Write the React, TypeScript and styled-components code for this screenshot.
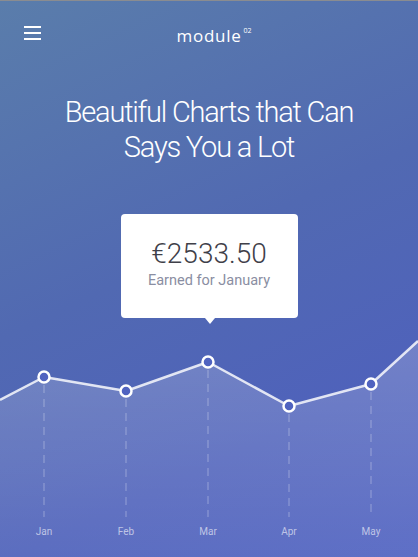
import React from "react";
import styled, { createGlobalStyle } from "styled-components";

const Global = createGlobalStyle`
  html, body { margin: 0; padding: 0; }
  body { font-family: Roboto, "Liberation Sans", sans-serif; }
`;

const Page = styled.div`
  width: 418px;
  height: 557px;
  box-sizing: border-box;
  border-top: 1px solid #8a8c90;
  background: linear-gradient(155deg, #5a7dab 0%, #5169b2 45%, #4f62bb 75%, #5264c2 100%);
  display: flex;
  flex-direction: column;
  overflow: hidden;
  position: relative;
`;

const Header = styled.header`
  height: 65px;
  display: flex;
  align-items: center;
  justify-content: center;
  position: relative;
`;

const Burger = styled.button`
  position: absolute;
  left: 24px;
  top: 25px;
  width: 17px;
  height: 14px;
  padding: 0;
  border: none;
  background: none;
  display: flex;
  flex-direction: column;
  justify-content: space-between;
  span {
    display: block;
    height: 2px;
    background: #fff;
  }
`;

const Logo = styled.div`
  color: #fff;
  font-family: "Open Sans", "Liberation Sans", sans-serif;
  font-size: 17px;
  letter-spacing: 0.7px;
  margin-top: 3px;
  margin-left: 10px;
  sup {
    font-size: 7px;
    letter-spacing: 0;
    margin-left: 2px;
    vertical-align: 9px;
  }
`;

const Title = styled.h1`
  margin: 29px 0 0;
  color: #fff;
  font-weight: 300;
  font-size: 29px;
  line-height: 35px;
  text-align: center;
  letter-spacing: -1.2px;
`;

const CardWrap = styled.div`
  display: flex;
  justify-content: center;
  margin-top: 49px;
`;

const Card = styled.div`
  width: 177px;
  height: 104px;
  box-sizing: border-box;
  background: #fff;
  border-radius: 4px;
  padding-top: 23px;
  text-align: center;
  position: relative;
  &::after {
    content: "";
    position: absolute;
    left: 84px;
    bottom: -6px;
    border-left: 5px solid transparent;
    border-right: 5px solid transparent;
    border-top: 6px solid #fff;
  }
`;

const Price = styled.div`
  font-size: 28px;
  font-weight: 300;
  line-height: 34px;
  color: #3f4049;
`;

const Sub = styled.div`
  font-size: 14.5px;
  line-height: 20px;
  color: #8a8ea2;
`;

const Chart = styled.svg`
  display: block;
  margin-top: 12px;
  flex: 1;
`;

const Label = styled.text`
  font-family: Roboto, "Liberation Sans", sans-serif;
  font-size: 10px;
  fill: rgba(255, 255, 255, 0.6);
`;

const OFF = 330;
const pts = [
  { m: "Jan", x: 44, y: 377 },
  { m: "Feb", x: 126, y: 391 },
  { m: "Mar", x: 208, y: 362 },
  { m: "Apr", x: 289, y: 406 },
  { m: "May", x: 371, y: 384 },
];

export default function App() {
  const line = [
    `0,${400 - OFF}`,
    ...pts.map((p) => `${p.x},${p.y - OFF}`),
    `418,${341 - OFF}`,
  ].join(" ");
  const area = `0,${400 - OFF} ${pts.map((p) => `${p.x},${p.y - OFF}`).join(" ")} 418,${341 - OFF} 418,227 0,227`;
  return (
    <>
      <Global />
      <Page>
        <Header>
          <Burger aria-label="menu">
            <span />
            <span />
            <span />
          </Burger>
          <Logo>
            module<sup>02</sup>
          </Logo>
        </Header>
        <Title>
          Beautiful Charts that Can
          <br />
          Says You a Lot
        </Title>
        <CardWrap>
          <Card>
            <Price>€2533.50</Price>
            <Sub>Earned for January</Sub>
          </Card>
        </CardWrap>
        <Chart width="418" height="227" viewBox="0 0 418 227">
          <defs>
            <linearGradient id="areaFill" x1="0" y1="0" x2="0" y2="1">
              <stop offset="0" stopColor="#fff" stopOpacity="0.2" />
              <stop offset="1" stopColor="#fff" stopOpacity="0.07" />
            </linearGradient>
          </defs>
          <polygon points={area} fill="url(#areaFill)" />
          {pts.map((p) => (
            <line
              key={p.m}
              x1={p.x}
              x2={p.x}
              y1={p.y - OFF + 8}
              y2={517 - OFF}
              stroke="rgba(255,255,255,0.22)"
              strokeWidth="1.5"
              strokeDasharray="8 6"
            />
          ))}
          <polyline points={line} fill="none" stroke="rgba(255,255,255,0.82)" strokeWidth="2.5" strokeLinejoin="round" />
          {pts.map((p) => (
            <circle key={p.m} cx={p.x} cy={p.y - OFF} r="5.5" fill="#5063c0" stroke="#fff" strokeWidth="2.5" />
          ))}
          {pts.map((p) => (
            <Label key={p.m} x={p.x} y={535 - OFF} textAnchor="middle">
              {p.m}
            </Label>
          ))}
        </Chart>
      </Page>
    </>
  );
}
